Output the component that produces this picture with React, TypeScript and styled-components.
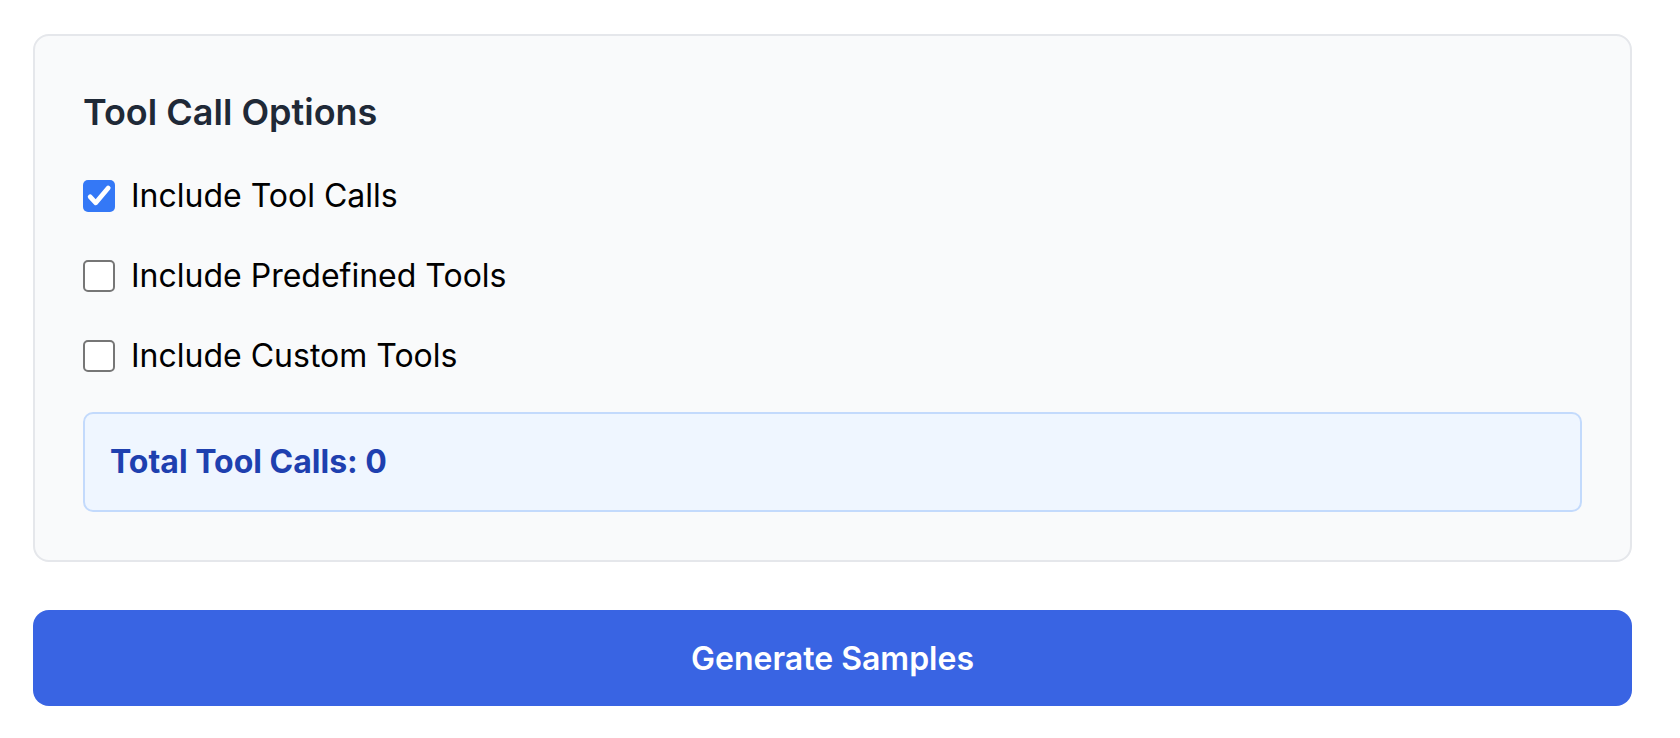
import React, { useState } from 'react'
import styled, { createGlobalStyle } from 'styled-components'

const GlobalStyle = createGlobalStyle`
  html, body {
    margin: 0;
    padding: 0;
    background: #ffffff;
  }
  body {
    font-family: Inter, "Noto Sans", "Liberation Sans", sans-serif;
    -webkit-font-smoothing: antialiased;
  }
`

const Page = styled.div`
  padding: 34px 48px 0 33px;
  display: flex;
  flex-direction: column;
  gap: 48px;
`

const Card = styled.section`
  background: #f9fafb;
  border: 2px solid #e5e7eb;
  border-radius: 16px;
  padding: 48px;
  display: flex;
  flex-direction: column;
  gap: 32px;
`

const Title = styled.h3`
  margin: 0;
  font-size: 36px;
  line-height: 56px;
  font-weight: 600;
  color: #1f2937;
`

const OptionRow = styled.label`
  display: flex;
  align-items: center;
  gap: 16px;
  font-size: 32px;
  line-height: 48px;
  color: #000000;
  cursor: pointer;
  user-select: none;
`

const HiddenInput = styled.input`
  display: none;
`

const Box = styled.span<{ $checked: boolean }>`
  width: 32px;
  height: 32px;
  box-sizing: border-box;
  border-radius: 5px;
  flex-shrink: 0;
  display: flex;
  align-items: center;
  justify-content: center;
  background: ${props => (props.$checked ? '#3478f6' : '#ffffff')};
  border: ${props => (props.$checked ? 'none' : '2px solid #767676')};
`

const TotalBox = styled.div`
  background: #eff6ff;
  border: 2px solid #c3dafc;
  border-radius: 10px;
  padding: 24px 25px;
  font-size: 32px;
  line-height: 48px;
  font-weight: 700;
  color: #1e40af;
`

const GenerateButton = styled.button`
  width: 100%;
  height: 96px;
  border: none;
  border-radius: 16px;
  background: #3964e3;
  color: #ffffff;
  font-family: inherit;
  font-size: 32px;
  font-weight: 600;
  cursor: pointer;
`

interface OptionProps {
  label: string
  checked: boolean
  onToggle: () => void
}

const Option = ({ label, checked, onToggle }: OptionProps) => (
  <OptionRow>
    <HiddenInput type="checkbox" checked={checked} onChange={onToggle} />
    <Box $checked={checked}>
      {checked && (
        <svg width="32" height="32" viewBox="0 0 16 16" fill="none">
          <path
            d="M3.6 8.4 L6.4 11.4 L12.6 4"
            stroke="#ffffff"
            strokeWidth="2.4"
            strokeLinecap="round"
            strokeLinejoin="round"
          />
        </svg>
      )}
    </Box>
    {label}
  </OptionRow>
)

const App = () => {
  const [opts, setOpts] = useState({
    toolCalls: true,
    predefined: false,
    custom: false,
  })

  const toggle = (key: keyof typeof opts) => () =>
    setOpts(prev => ({ ...prev, [key]: !prev[key] }))

  // nothing selected in the tool lists yet
  const total = 0

  return (
    <>
      <GlobalStyle />
      <Page>
        <Card>
          <Title>Tool Call Options</Title>
          <Option label="Include Tool Calls" checked={opts.toolCalls} onToggle={toggle('toolCalls')} />
          <Option label="Include Predefined Tools" checked={opts.predefined} onToggle={toggle('predefined')} />
          <Option label="Include Custom Tools" checked={opts.custom} onToggle={toggle('custom')} />
          <TotalBox>Total Tool Calls: {total}</TotalBox>
        </Card>
        <GenerateButton>Generate Samples</GenerateButton>
      </Page>
    </>
  )
}

export default App
